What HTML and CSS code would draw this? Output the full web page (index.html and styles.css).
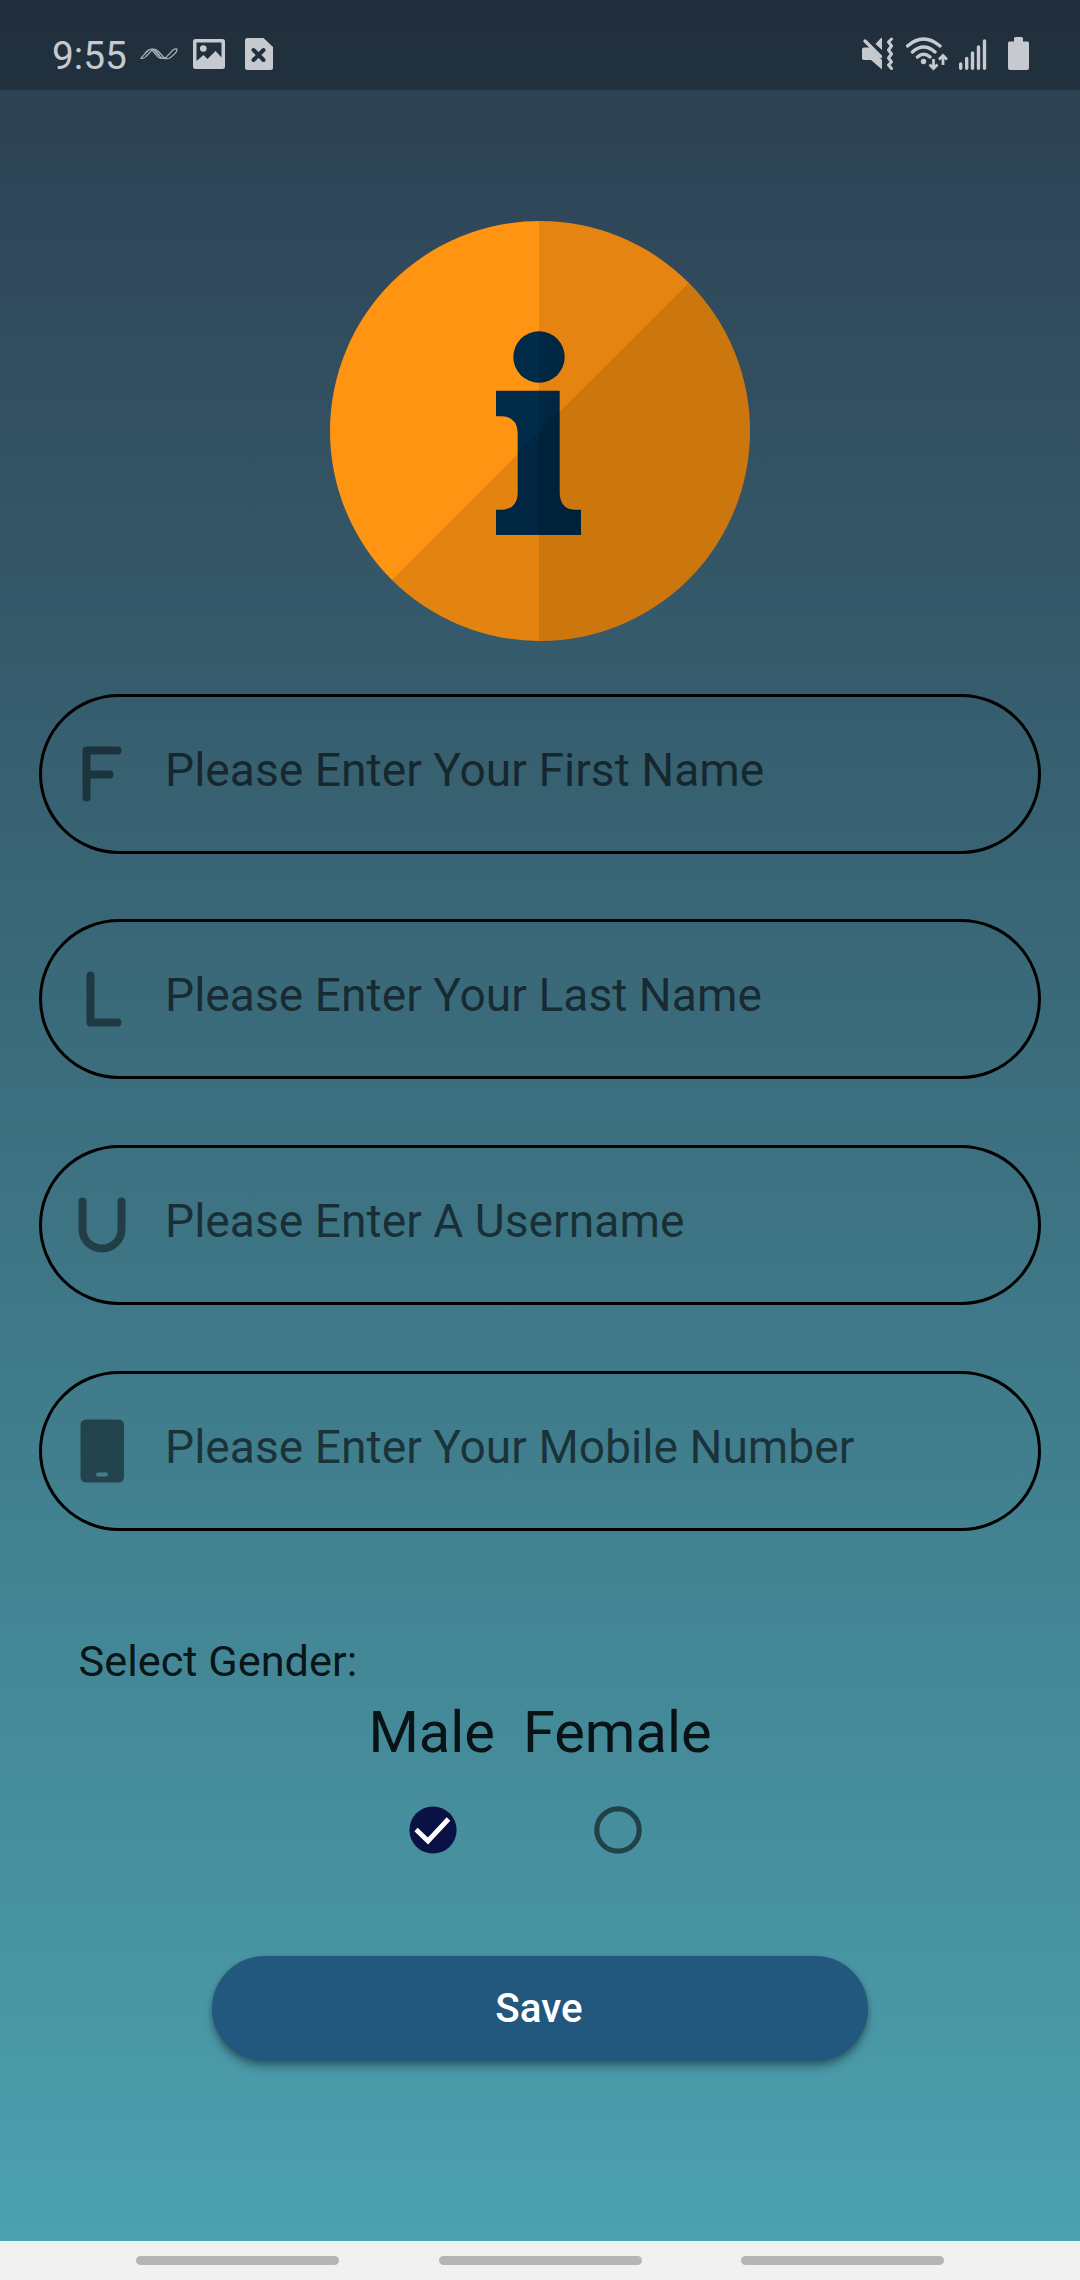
FILE: index.html
```html
<!DOCTYPE html>
<html lang="en">
<head>
<meta charset="utf-8">
<title>Your details</title>
<link rel="stylesheet" href="styles.css">
</head>
<body>
<div class="screen">
  <header class="status">
    <div class="status-left">
      <span class="clock">9:55</span>
      <svg class="wave" width="38" height="12" viewBox="0 0 38 12"><path d="M1 10.200L8 2.500Q10 .800 13 1Q16 1 18 3L24 9.500H26L33 2Q34.500.800 37 1Q37 4 35 5.500L30 10Q28 11 24 10.500Q22 10.500 20 8.500L14 2H12L6 8.500Q4 11 1 10.200Z"/><path d="M12 2L18 9Q20 10.700 24 10.500M14 1Q17 4 20 8M5 5Q9 1 13 1"/></svg>
      <svg class="picture" width="32" height="30" viewBox="0 0 32 30"><path fill-rule="evenodd" d="M2.500 0h27Q32 0 32 2.500v25Q32 30 29.500 30h-27Q0 30 0 27.500v-25Q0 0 2.500 0ZM3.500 3.500V22L10.500 16L14.500 20L22.500 12L28.500 18.500V3.500Z"/><circle cx="10.300" cy="9.500" r="3.300"/></svg>
      <svg class="file" width="28" height="32" viewBox="0 0 28 32"><path d="M2.500 0H18.500L28 9v20.500Q28 32 25.500 32h-23Q0 32 0 29.500v-27Q0 0 2.500 0Z"/><path class="cross" d="M8.500 12L18.500 22M18.500 12L8.500 22"/></svg>
    </div>
    <div class="status-right">
      <svg class="mute" width="32" height="34" viewBox="0 0 32 34"><path d="M0 12.500Q0 10.500 2 10.500H7.500L20 23V32.500L9 23H2Q0 23 0 21ZM13.500 7L18.500 1.500Q20 0 20 2V13Z"/><path class="line" d="M3 4L18.500 19.500"/><path class="line thin" d="M29.500 2L26.500 5L29.500 9L26.500 13L29.500 17L26.500 21L29.500 25L26.500 28L29.500 31.500"/></svg>
      <svg class="wifi" width="42" height="34" viewBox="0 0 42 34"><path class="line" d="M1.500 9Q17.500-5 34 9M6.500 15Q17.500 5 29 15M11.500 20Q17.500 14.500 24 20"/><circle cx="17.500" cy="24.500" r="2.700"/><path class="line arrow" d="M27.500 22V30M23.500 27.500L27.500 31.500L31.500 27.500M37 28V20M33 22.500L37 18.500L41 22.500"/></svg>
      <svg class="signal" width="28" height="31" viewBox="0 0 28 31"><path class="line bars" d="M1.700 25V29.200M7.700 19.500V29.200M13.500 14V29.200M19.500 8V29.200M25.500 2V29.200"/></svg>
      <svg class="battery" width="21" height="33" viewBox="0 0 21 33"><path d="M6 4.500V1.500Q6 0 7.500 0h6Q15 0 15 1.500V4.500H19.500Q21 4.500 21 6V31Q21 33 19 33H2Q0 33 0 31V6Q0 4.500 1.500 4.500Z"/></svg>
    </div>
  </header>

  <main class="content">
    <svg class="info" width="420" height="420" viewBox="0 0 420 420">
      <clipPath id="disc"><circle cx="210" cy="210" r="210"/></clipPath>
      <g clip-path="url(#disc)">
        <path fill="#ff9412" d="M0 0H420V420H0Z"/>
        <g fill="#002b49">
          <circle cx="209" cy="136" r="25.700"/>
          <path d="M166 169.700H229.700V273Q231 288.700 245 288.700H251V314H166V288.700H172Q187 288 187.700 273V211.700Q187 196 172 195.300H166Z"/>
        </g>
        <path fill="#000" opacity=".1" d="M209 0H420V420H209Z"/>
        <path fill="#000" opacity=".105" d="M420.600 0V420.600H0Z"/>
      </g>
    </svg>

    <form class="form">
      <label class="field">
        <svg class="field-icon" width="64" height="68" viewBox="0 0 64 68"><path class="stroke" d="M16.500 57.500V10.500H47.500M16.500 34.500H39.500"/></svg>
        <span>Please Enter Your First Name</span>
      </label>
      <label class="field">
        <svg class="field-icon" width="64" height="68" viewBox="0 0 64 68"><path class="stroke" d="M20.500 10.500V57.500H47.500"/></svg>
        <span>Please Enter Your Last Name</span>
      </label>
      <label class="field">
        <svg class="field-icon" width="64" height="68" viewBox="0 0 64 68"><path class="stroke" d="M12.500 10.500V38.500A19.500 19 0 0 0 51.500 38.500V10.500"/></svg>
        <span>Please Enter A Username</span>
      </label>
      <label class="field">
        <svg class="field-icon" width="64" height="68" viewBox="0 0 64 68"><path fill-rule="evenodd" d="M16.500 2.500h31.500q6 0 6 6v51q0 6-6 6h-31.500q-6 0-6-6v-51q0-6 6-6ZM28 55.500a2 2 0 0 0 0 4h8a2 2 0 0 0 0-4Z"/></svg>
        <span>Please Enter Your Mobile Number</span>
      </label>
    </form>

    <p class="gender-label">Select Gender:</p>
    <div class="gender-names"><span>Male</span><span>Female</span></div>
    <div class="gender-options">
      <svg width="48" height="48" viewBox="0 0 48 48"><circle cx="24" cy="24" r="23.600" fill="#0a1145"/><path d="M7 23.500L19 35L39.500 13" fill="none" stroke="#fff" stroke-width="4.800"/></svg>
      <svg width="48" height="48" viewBox="0 0 48 48"><circle cx="24" cy="24" r="21.200" fill="none" stroke="#000" stroke-opacity=".54" stroke-width="5.200"/></svg>
    </div>
    <button class="save" type="button">Save</button>
  </main>

  <nav class="nav"><i></i><i></i><i></i></nav>
</div>
</body>
</html>
```
FILE: styles.css
```css
* { box-sizing: border-box; }

body {
  margin: 0;
  font-family: Roboto, "Liberation Sans", sans-serif;
}

svg { display: block; flex: none; }

.screen {
  width: 1080px;
  height: 2280px;
  display: flex;
  flex-direction: column;
  background: linear-gradient(#2c3e50, #4ca1af 2241px);
}

.status {
  height: 90px;
  flex: none;
  display: flex;
  justify-content: space-between;
  padding: 0 51px 0 52px;
  background: rgba(0, 0, 0, .25);
  color: #c6cacf;
  fill: #c6cacf;
}

.status-left, .status-right { display: flex; }
.clock { width: 88px; font-size: 38.800px; line-height: 46px; padding-top: 33px; }
.wave { margin-top: 48px; fill: none; stroke: #a6adb4; stroke-width: 1.200; }
.picture { margin: 39px 0 0 15px; }
.file { margin: 38px 0 0 20px; }
.cross { fill: none; stroke: #22303d; stroke-width: 4; stroke-linecap: round; }

.line { fill: none; stroke: #c6cacf; stroke-width: 3.400; stroke-linecap: round; }
.thin { stroke-width: 3; stroke-linejoin: round; }
.arrow { stroke-width: 2.800; stroke-linecap: butt; }
.mute { margin-top: 37px; }
.wifi { margin: 37px 0 0 12px; }
.signal { margin: 39px 0 0 11px; }
.battery { margin: 37px 0 0 21px; }

.content {
  height: 2151px;
  flex: none;
  display: flex;
  flex-direction: column;
  align-items: center;
  padding: 131px 39px 0;
}

.form {
  width: 100%;
  display: grid;
  gap: 65.900px;
  margin-top: 52.500px;
}

.field {
  height: 160px;
  display: flex;
  align-items: center;
  border: 3px solid #000;
  border-radius: 80px;
  padding: 0 0 0 28px;
}

.field-icon { fill: rgba(0, 0, 0, .46); }
.stroke {
  fill: none;
  stroke: rgba(0, 0, 0, .46);
  stroke-width: 8;
  stroke-linecap: round;
  stroke-linejoin: round;
}

.field span {
  margin: 0 0 8px 31px;
  font-size: 46.200px;
  line-height: 54px;
  color: rgba(0, 0, 0, .6);
  white-space: nowrap;
}

.gender-label {
  align-self: flex-start;
  margin: 106px 0 0 39.500px;
  font-size: 43.300px;
  line-height: 50px;
  color: rgba(0, 0, 0, .87);
}

.gender-names {
  display: flex;
  gap: 28px;
  margin-top: 12px;
  font-size: 57.750px;
  line-height: 66px;
  color: rgba(0, 0, 0, .87);
}

.gender-options {
  display: flex;
  gap: 137px;
  margin: 41px 30px 0 0;
}

.save {
  width: 656px;
  height: 105px;
  margin-top: 102px;
  padding: 0 2px 0 0;
  border: 0;
  border-radius: 53px;
  background: #22577e;
  color: #fff;
  font: 500 40.400px/46px Roboto, "Liberation Sans", sans-serif;
  box-shadow: 0 6px 9px rgba(0, 0, 0, .3), 0 2px 4px rgba(0, 0, 0, .15);
}

.nav {
  flex: 1;
  display: flex;
  justify-content: center;
  gap: 99.500px;
  padding-top: 15px;
  background: #f1f1f1;
}

.nav i {
  width: 203px;
  height: 9px;
  border-radius: 4.500px;
  background: #b5b5b5;
}
```
